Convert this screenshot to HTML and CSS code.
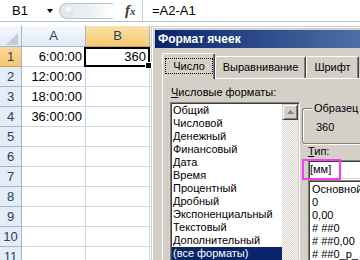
FILE: index.html
```html
<!DOCTYPE html>
<html lang="ru">
<head>
    <meta charset="UTF-8">
    <meta name="viewport" content="width=device-width, initial-scale=1.0">
    <title>Формат ячеек</title>
    <link rel="stylesheet" href="styles.css">
</head>
<body>

    <!-- Formula bar -->
    <div class="formula-bar">
        <div class="name-box"><span>B1</span><span class="drop"></span></div>
        <div class="splitter"><span class="knob"></span></div>
        <div class="fx"><i>f</i><i class="fx-x">x</i></div>
        <div class="formula">=A2-A1</div>
    </div>

    <!-- Sheet -->
    <div class="sheet">
        <div class="row head">
            <div class="rh corner"><span class="tri"></span></div>
            <div class="ch">A</div>
            <div class="ch sel">B</div>
            <div class="ch rest"></div>
        </div>
        <div class="row">
            <div class="rh sel">1</div>
            <div class="cell">6:00:00</div>
            <div class="cell active">360<span class="handle"></span></div>
            <div class="cell rest"></div>
        </div>
        <div class="row">
            <div class="rh">2</div>
            <div class="cell">12:00:00</div>
            <div class="cell"></div>
            <div class="cell rest"></div>
        </div>
        <div class="row">
            <div class="rh">3</div>
            <div class="cell">18:00:00</div>
            <div class="cell"></div>
            <div class="cell rest"></div>
        </div>
        <div class="row">
            <div class="rh">4</div>
            <div class="cell">36:00:00</div>
            <div class="cell"></div>
            <div class="cell rest"></div>
        </div>
        <div class="row"><div class="rh">5</div><div class="cell"></div><div class="cell"></div><div class="cell rest"></div></div>
        <div class="row"><div class="rh">6</div><div class="cell"></div><div class="cell"></div><div class="cell rest"></div></div>
        <div class="row"><div class="rh">7</div><div class="cell"></div><div class="cell"></div><div class="cell rest"></div></div>
        <div class="row"><div class="rh">8</div><div class="cell"></div><div class="cell"></div><div class="cell rest"></div></div>
        <div class="row"><div class="rh">9</div><div class="cell"></div><div class="cell"></div><div class="cell rest"></div></div>
        <div class="row"><div class="rh">10</div><div class="cell"></div><div class="cell"></div><div class="cell rest"></div></div>
        <div class="row"><div class="rh">11</div><div class="cell"></div><div class="cell"></div><div class="cell rest"></div></div>
    </div>

    <!-- Format Cells dialog -->
    <div class="dialog">
        <div class="frame">
            <div class="title">Формат ячеек</div>
            <div class="body">
                <div class="tabs">
                    <div class="tab active"><span class="focus">Число</span></div>
                    <div class="tab tab-align">Выравнивание</div>
                    <div class="tab tab-font">Шрифт</div>
                </div>
                <div class="panel">
                    <div class="left">
                        <div class="label"><u>Ч</u>исловые форматы:</div>
                        <div class="listbox">
                            <ul class="items">
                                <li>Общий</li>
                                <li>Числовой</li>
                                <li>Денежный</li>
                                <li>Финансовый</li>
                                <li>Дата</li>
                                <li>Время</li>
                                <li>Процентный</li>
                                <li>Дробный</li>
                                <li>Экспоненциальный</li>
                                <li>Текстовый</li>
                                <li>Дополнительный</li>
                                <li class="picked">(все форматы)</li>
                            </ul>
                            <div class="scroll">
                                <div class="up">
                                    <svg width="7" height="4" viewBox="0 0 7 4"><polygon points="3.5,0 7,4 0,4" fill="#808080"/></svg>
                                </div>
                                <div class="track"></div>
                            </div>
                        </div>
                    </div>
                    <div class="right">
                        <div class="sample">
                            <span class="sample-title">Образец</span>
                            <div class="sample-value">360</div>
                        </div>
                        <div class="label type-label"><u>Т</u>ип:</div>
                        <div class="type-field">
                            <div class="input">[мм]</div>
                            <span class="mark"></span>
                        </div>
                        <ul class="type-list">
                            <li>Основной</li>
                            <li>0</li>
                            <li>0,00</li>
                            <li># ##0</li>
                            <li># ##0,00</li>
                            <li># ##0_р_</li>
                        </ul>
                    </div>
                </div>
            </div>
        </div>
    </div>

</body>
</html>
```

FILE: styles.css
```css
body {
    margin: 0;
    width: 360px;
    height: 260px;
    overflow: hidden;
    position: relative;
    background: #fff;
    font-family: "Liberation Sans", Arial, sans-serif;
    font-size: 13px;
    color: #000;
}
ul {
    list-style: none;
    margin: 0;
    padding: 0;
}

/* Formula bar */
.formula-bar {
    display: flex;
    align-items: center;
    height: 21px;
    border-bottom: 1px solid #b1bfcf;
    background: #fff;
}
.name-box {
    display: flex;
    align-items: center;
    width: 58px;
    height: 21px;
    padding-left: 12px;
    box-sizing: border-box;
}
.drop {
    margin-left: auto;
    margin-right: 5px;
    width: 0;
    height: 0;
    border-left: 3px solid transparent;
    border-right: 3px solid transparent;
    border-top: 4px solid #000;
}
.splitter {
    display: flex;
    align-items: center;
    width: 54px;
    height: 16px;
    margin-left: 1px;
    box-sizing: border-box;
    border: 1px solid #bac4d1;
    border-right: none;
    border-radius: 8px 0 0 8px;
    background: linear-gradient(90deg, #e3e7ec, #eef1f4 60%, #fff);
}
.knob {
    width: 9px;
    height: 9px;
    margin-left: 5px;
    border-radius: 50%;
    background: radial-gradient(circle at 40% 35%, #fff, #c9d0d8);
}
.fx {
    width: 30px;
    height: 21px;
    box-sizing: border-box;
    padding-left: 12px;
    border-right: 1px solid #c5cfdb;
    font-family: "Liberation Serif", serif;
    font-weight: bold;
    font-size: 15px;
    line-height: 21px;
    color: #3a3a3a;
}
.fx-x {
    font-size: 11px;
}
.formula {
    padding-left: 9px;
    line-height: 21px;
}

/* Sheet */
.sheet {
    margin-top: 4px;
    height: 234px;
    overflow: hidden;
    background: #fff;
}
.row {
    display: flex;
    height: 20px;
}
.row.head {
    height: 21px;
}
.rh, .ch, .cell {
    box-sizing: border-box;
    height: 100%;
    border-right: 1px solid #d0d7e5;
    border-bottom: 1px solid #d0d7e5;
    line-height: 19px;
    white-space: nowrap;
}
.rh {
    width: 22px;
    text-align: center;
    background: #e4ecf7;
    color: #27415f;
    border-color: #9eb6ce;
}
.rh.sel {
    background: linear-gradient(#f9d99a, #f4c76f);
    border-bottom-color: #c2a46c;
}
.corner {
    position: relative;
    background: linear-gradient(#f4f7fb, #e2eaf5);
}
.tri {
    position: absolute;
    right: 3px;
    bottom: 1px;
    width: 0;
    height: 0;
    border-left: 12px solid transparent;
    border-bottom: 12px solid #c0ccda;
}
.ch {
    width: 64px;
    text-align: center;
    line-height: 20px;
    color: #27415f;
    background: linear-gradient(#f6f9fc, #e0e8f3);
    border-color: #9eb6ce;
}
.ch.sel {
    background: linear-gradient(#fbe1a8, #f5c970);
    border-bottom-color: #c2a46c;
}
.cell {
    width: 64px;
    padding-right: 3px;
    text-align: right;
}
.rest {
    flex: 1;
}
.cell.active {
    position: relative;
}
.cell.active::after {
    content: "";
    position: absolute;
    left: -2px;
    top: 0;
    width: 66px;
    height: 20px;
    box-sizing: border-box;
    border: 2px solid #000;
}
.handle {
    position: absolute;
    left: 60px;
    top: 16px;
    width: 5px;
    height: 5px;
    background: #000;
    box-shadow: 0 0 0 1px #fff;
    z-index: 1;
}

/* Dialog */
.dialog {
    position: absolute;
    left: 151px;
    top: 26px;
    width: 208px;
    height: 233px;
    border-top: 1px solid #d4d0c8;
    border-left: 1px solid #d4d0c8;
    font-size: 11px;
}
.frame {
    height: 100%;
    box-sizing: border-box;
    overflow: hidden;
    padding: 2px 0 0 2px;
    border-top: 1px solid #fff;
    border-left: 1px solid #fff;
    background: #d4d0c8;
}
.title {
    height: 18px;
    line-height: 18px;
    padding-left: 3px;
    color: #fff;
    font-weight: bold;
    font-size: 12px;
    background: linear-gradient(90deg, #0a246a, #4d6fa6 205px);
}
.body {
    padding: 5px 0 0 7px;
}
.tabs {
    display: flex;
    align-items: flex-end;
    height: 25px;
}
.tab {
    box-sizing: border-box;
    height: 22px;
    padding-top: 4px;
    line-height: 13px;
    text-align: center;
    white-space: nowrap;
    border-top: 1px solid #fff;
    border-left: 1px solid #fff;
    border-right: 1px solid #404040;
    border-radius: 2px 2px 0 0;
    box-shadow: inset -1px 0 #808080;
}
.tab.active {
    position: relative;
    z-index: 1;
    width: 53px;
    height: 26px;
    margin-bottom: -1px;
    padding-top: 0;
    background: #d4d0c8;
}
.focus {
    display: block;
    margin: 4px 1px 0 2px;
    padding: 1px 0;
    line-height: 12px;
    border: 1px dotted #000;
}
.tab-align {
    width: 91px;
}
.tab-font {
    width: 53px;
}
.panel {
    display: flex;
    align-items: flex-start;
    padding: 7px 0 0 7px;
    height: 180px;
    border-top: 1px solid #fff;
    border-left: 1px solid #fff;
}
.left {
    flex: none;
    width: 130px;
}
.label {
    line-height: 13px;
    padding-left: 1px;
}
.listbox {
    display: flex;
    margin-top: 3px;
    height: 170px;
    box-sizing: border-box;
    border: 1px solid;
    border-color: #808080 #fff #fff #808080;
    box-shadow: inset 1px 1px #404040, inset -1px -1px #d4d0c8;
    background: #fff;
    padding: 1px;
}
.items {
    flex: 1;
}
.items li, .type-list li {
    height: 13px;
    line-height: 13px;
    padding-left: 1px;
    white-space: nowrap;
}
.items li.picked {
    background: #0a246a;
    color: #fff;
}
.scroll {
    display: flex;
    flex-direction: column;
    width: 16px;
}
.up {
    display: flex;
    align-items: center;
    justify-content: center;
    height: 16px;
    box-sizing: border-box;
    border: 1px solid;
    border-color: #d4d0c8 #404040 #404040 #d4d0c8;
    box-shadow: inset 1px 1px #fff, inset -1px -1px #808080;
    background: #d4d0c8;
}
.track {
    flex: 1;
    background: repeating-conic-gradient(#d4d0c8 0 25%, #fff 0 50%) 0 0 / 2px 2px;
}
.right {
    flex: none;
    width: 90px;
    margin-left: 2px;
    padding-top: 22px;
}
.sample {
    height: 36px;
    box-sizing: border-box;
    padding-left: 13px;
    border: 1px solid #808080;
    border-right: none;
    border-radius: 3px 0 0 3px;
    box-shadow: inset 1px 1px #fff, 0 1px #fff;
}
.sample-title {
    display: block;
    width: max-content;
    margin: -7px 0 0 -4px;
    padding: 0 2px;
    line-height: 13px;
    background: #d4d0c8;
}
.sample-value {
    margin-top: 6px;
    line-height: 13px;
}
.type-label {
    margin: 1px 0 0 6px;
    padding-left: 0;
}
.type-field {
    position: relative;
    margin: 2px 0 0 6px;
}
.input {
    height: 20px;
    box-sizing: border-box;
    padding-left: 1px;
    line-height: 16px;
    border: 1px solid;
    border-color: #808080 #fff #fff #808080;
    box-shadow: inset 1px 1px #404040, inset -1px -1px #d4d0c8;
    background: #fff;
}
.mark {
    position: absolute;
    left: -6px;
    top: -1px;
    width: 39px;
    height: 21px;
    box-sizing: border-box;
    border: 2px solid #f53cf5;
}
.type-list {
    margin-left: 6px;
    height: 90px;
    padding: 2px 0 0 2px;
    border: 1px solid;
    border-color: #808080 #fff #fff #808080;
    box-shadow: inset 1px 1px #404040;
    background: #fff;
}
```
